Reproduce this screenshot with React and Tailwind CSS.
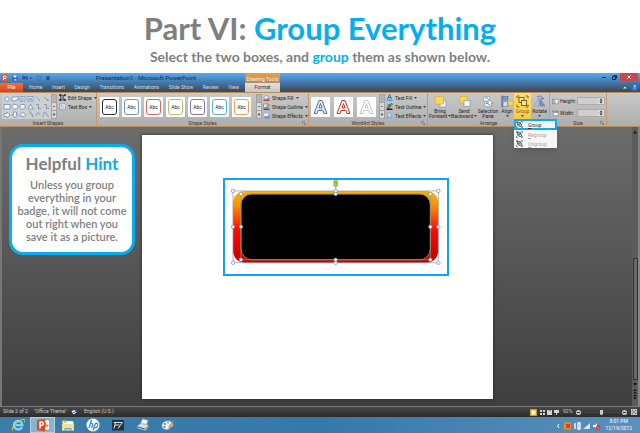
import React, { useState } from 'react';

const tabs = ['Home', 'Insert', 'Design', 'Transitions', 'Animations', 'Slide Show', 'Review', 'View'];

const shapeStyles = [
  'border-[#2b2b2b]',
  'border-[#6c97c9]',
  'border-[#cf6a66]',
  'border-[#a9c66c]',
  'border-[#8f74b0]',
  'border-[#55b3cb]',
  'border-[#f5a05a]',
];

const wordArt = [
  { fill: '#dfe8f3', stroke: '#4a76a8' },
  { fill: '#ffffff', stroke: '#c0302c' },
  { fill: '#ffffff', stroke: '#c4c4c4' },
];

const Caret = () => (
  <svg className="w-[3px] h-[2px] shrink-0" viewBox="0 0 3 2"><path d="M0 0h3L1.500 2z" fill="#444" /></svg>
);

const Launcher = () => (
  <svg className="w-1 h-1" viewBox="0 0 4 4" fill="none" stroke="#666" strokeWidth=".6"><path d="M.5 3V.5H3M2 2l1.500 1.500M3.600 2v1.600H2" /></svg>
);

const GalleryScroll = () => (
  <div className="w-[6px] shrink-0 flex flex-col bg-[#b4b4b4] border border-[#a2a2a2]">
    {['M1 2L2 1l1 1z', 'M1 1h2L2 2.200z', 'M1 .4h2M1 1.400h2L2 2.600z'].map((d, i) => (
      <button key={i} aria-label="Scroll gallery" className={`flex-1 flex items-center justify-center ${i ? 'bg-[#d8d8d8] border-t border-[#a2a2a2]' : ''}`}>
        <svg className="w-1 h-[3px]" viewBox="0 0 4 3"><path d={d} fill={i ? '#333' : '#999'} stroke={i === 2 ? '#333' : 'none'} strokeWidth=".4" /></svg>
      </button>
    ))}
  </div>
);

const RibbonGroup = ({ label, className, launcher, children }) => (
  <section aria-label={label} className={`shrink-0 flex flex-col border-r border-[#c79c68] ${className}`}>
    <div className="h-[27px] flex">{children}</div>
    <div className="h-[6px] flex items-center justify-center relative text-[#333]">
      <span>{label}</span>
      {launcher && <span className="absolute right-[2px] top-px"><Launcher /></span>}
    </div>
  </section>
);

const Command = ({ icon, label }) => (
  <button className="h-[9px] flex items-center gap-[2px] whitespace-nowrap">
    <svg className="w-[7px] h-[7px] shrink-0" viewBox="0 0 14 14">{icon}</svg>
    {label}
    <Caret />
  </button>
);

const BigCommand = ({ icon, lines, caret, className }) => (
  <button className={`flex flex-col items-center pt-[2px] ${className}`}>
    <svg className="w-[13px] h-[13px] shrink-0" viewBox="0 0 26 26">{icon}</svg>
    {lines.map((line, i) => (
      <span key={line} className="h-[5px] flex items-center gap-[1px] whitespace-nowrap">
        {line}
        {caret && lines.length > 1 && i === lines.length - 1 && <Caret />}
      </span>
    ))}
    {caret && lines.length === 1 && <span className="h-[5px] flex items-center"><Caret /></span>}
  </button>
);

const GroupGlyph = ({ dark }) => (
  <g fill="none" stroke={dark ? '#222' : '#76642a'} strokeWidth="2">
    <rect x="6" y="5" width="10" height="10" fill={dark ? '#b8d2ee' : '#ffe58a'} />
    <rect x="11" y="11" width="10" height="10" fill={dark ? '#b8d2ee' : '#ffe58a'} />
    <path d="M2 7V2h5M19 2h5v5M2 19v5h5M24 19v5h-5" />
  </g>
);

const ShapesGallery = () => (
  <svg className="w-[49px] h-[25px] shrink-0 bg-[#cfcfcf]" viewBox="0 0 49 25" fill="#eef4fb" stroke="#6f90b5" strokeWidth=".8">
    <circle cx="5" cy="5" r="2.200" />
    <path d="M10 3h4l2-1v4h-2l-1 1h-3zM18 2.500h5v4.500h-5z" />
    <path d="M19 4h2v2h-2" />
    <rect x="26" y="2.500" width="5" height="4.500" />
    <path d="M27 4.500h3M27 5.700h3" />
    <path d="M34 2.500l4 4.500M42 2.500l4 4.500v-2" fill="none" />
    <rect x="2" y="10.500" width="6" height="4.500" />
    <ellipse cx="13" cy="12.700" rx="3" ry="2.400" />
    <rect x="18" y="10.500" width="5" height="4.500" rx="1" />
    <path d="M28.500 10l2.500 5h-5z" />
    <path d="M34 10.500h2.500v4H39M42 10.500h2.500v4H47l-1-1" fill="none" />
    <path d="M2 19.500h3V18l3 3-3 3v-1.500H2zM11.500 18h3v3H16l-3 2.500-3-2.500h1.500zM18 22c0-2 1-1 1.500-3 2-1.500 3 0 2.500 1 2 0 2 2.500 0 2.500z" />
    <path d="M27 17.500l2 1-1 1 3 1.500-1 .5 1 2M34 22c0-4 4-4 4-1M40 23c3-1 1-5 3-5s1 4 4 5" fill="none" />
  </svg>
);

const TitleBar = () => (
  <div className="h-[10px] flex items-center">
    <div className="w-[96px] flex items-center gap-1 pl-[1px]">
      <svg className="w-[7px] h-[8px]" viewBox="0 0 14 16"><rect x="1" y="1" width="12" height="14" rx="1" fill="#e2562b" /><path d="M5 12V4h3a2.400 2.400 0 010 5H5" fill="none" stroke="#fff" strokeWidth="2" /></svg>
      <svg className="w-[6px] h-[6px]" viewBox="0 0 12 12"><path d="M1 1h10v10H1z" fill="#4347b5" /><path d="M3 1h6v4H3z" fill="#fff" /><path d="M4 8h5v3H4z" fill="#c9cdf0" /></svg>
      <svg className="w-[10px] h-[6px]" viewBox="0 0 20 12" fill="none" stroke="#2c48a8" strokeWidth="2.500"><path d="M3 6c3-4 9-3 7 4M2 1v6h5" /><path d="M16 5h4l-2 3z" fill="#223" stroke="none" /></svg>
      <svg className="w-[6px] h-[6px]" viewBox="0 0 12 12" fill="none" stroke="#51749d" strokeWidth="2.200"><path d="M9 3a4.300 4.300 0 10 1 5M11 1v4H7" /></svg>
      <svg className="w-1 h-[5px]" viewBox="0 0 4 5"><path d="M0 .5h4v1H0zM0 2.500h4L2 4.500z" fill="#1b2c40" /></svg>
    </div>
    <h2 className="w-[149px] text-[6px] leading-[10px] text-[#152a40] whitespace-nowrap">Presentation1 - Microsoft PowerPoint</h2>
    <div className="w-[35px] h-full text-center leading-[12px] text-[#fff3df] bg-linear-to-b from-[#e5a13f] to-[#b98a67] whitespace-nowrap">Drawing Tools</div>
    <div className="ml-auto h-full flex items-start pr-[2px]">
      <button aria-label="Minimize" className="w-[10px] h-2 flex items-center justify-center"><span className="w-1 h-px bg-[#10263d]" /></button>
      <button aria-label="Restore" className="w-[11px] h-2 flex items-center justify-center"><svg className="w-[5px] h-[5px]" viewBox="0 0 5 5" fill="none" stroke="#10263d"><path d="M.5 1.500h3v3h-3zM1.500.5h3v3" /></svg></button>
      <button aria-label="Close" className="w-[18px] h-2 bg-[#c9484b] flex items-center justify-center"><svg className="w-1 h-1" viewBox="0 0 4 4" stroke="#fff"><path d="M.5.5l3 3M3.500.5l-3 3" /></svg></button>
    </div>
  </div>
);

const TabRow = () => (
  <nav className="h-[9px] flex items-stretch text-[#d7dde3]">
    <div className="w-[245px] shrink-0 flex items-stretch">
      <button className="w-[23px] shrink-0 mr-[6px] bg-linear-to-b from-[#f0703a] to-[#d8401c] text-white rounded-t-[1px]">File</button>
      <div className="flex-1 flex items-stretch justify-between pr-[6px]">
        {tabs.map(tab => (
          <button key={tab} className="whitespace-nowrap">{tab}</button>
        ))}
      </div>
    </div>
    <button className="w-[35px] bg-linear-to-b from-[#e6ded6] to-[#c6c6c6] text-[#333]">Format</button>
    <div className="ml-auto flex items-center gap-1 pr-[2px]">
      <button aria-label="Minimize ribbon" className="flex"><svg className="w-1 h-[3px]" viewBox="0 0 4 3"><path d="M0 2.500L2 .5l2 2z" fill="#d9e4ee" /></svg></button>
      <button aria-label="Help" className="w-[7px] h-[7px] rounded-full bg-[#2f6fd4] text-white leading-[7px] font-bold">?</button>
    </div>
  </nav>
);

const SizeField = ({ id, label, icon }) => (
  <div className="flex items-center gap-[1px]">
    <svg className="w-[7px] h-[7px] shrink-0" viewBox="0 0 16 14" fill="#fff" stroke="#555">{icon}</svg>
    <label htmlFor={id} className="w-[16px] shrink-0">{label}</label>
    <span className="flex h-2 w-[28px] shrink-0 border border-[#aaa] bg-[#cfcfcf]">
      <input id={id} className="min-w-0 flex-1 bg-transparent outline-none" />
      <svg className="w-[6px] h-[6px] bg-[#dedede]" viewBox="0 0 6 6"><path d="M1.500 2.400L3 .6l1.500 1.800zM1.500 3.600h3L3 5.400z" fill="#222" /></svg>
    </span>
  </div>
);

const GroupMenu = () => (
  <div role="menu" className="absolute left-0 top-[26px] z-10 w-[43px] bg-[#f6f6f6] text-[#a6a6a6] shadow-md">
    {['Group', 'Regroup', 'Ungroup'].map((item, i) => (
      <button
        key={item}
        role="menuitem"
        disabled={i > 0}
        className={`w-full flex items-center gap-[5px] ${i === 0 ? 'h-[11px] border-2 border-[#10a8ee] bg-[#f4f6fa] text-[#333]' : 'h-[9px] px-[2px]'}`}
      >
        <svg className="w-[7px] h-[7px]" viewBox="0 0 26 26"><GroupGlyph dark /></svg>
        <span><u>{item[0]}</u>{item.slice(1)}</span>
      </button>
    ))}
  </div>
);

const Ribbon = () => (
  <div className="h-[35px] flex border-y border-[#c08c4e] bg-linear-to-b from-[#c9c9c9] to-[#aeaeae] text-[#222] leading-[6px]">
    <RibbonGroup label="Insert Shapes" className="w-[97px]">
      <div className="flex shrink-0 py-[1px] pl-[2px]">
        <ShapesGallery />
        <GalleryScroll />
      </div>
      <div className="flex flex-col pl-[2px]">
        <Command label="Edit Shape" icon={<g stroke="#222" strokeWidth="1.500" fill="#8fa9c9"><path d="M2 2l9 1-3 4 3 5H2l2-5z" /><path d="M1 1h2v2H1zM11 1h2v2h-2zM1 11h2v2H1zM11 11h2v2h-2z" fill="#222" /></g>} />
        <Command label="Text Box" icon={<g><rect x="1" y="2" width="12" height="10" fill="#f3f7fb" stroke="#5683b5" /><path d="M3 5h4M3 8h8" stroke="#444" /></g>} />
      </div>
    </RibbonGroup>
    <RibbonGroup label="Shape Styles" className="w-[212px]" launcher>
      <div className="flex items-center gap-[3px] pl-[3px] w-[159px] shrink-0">
        {shapeStyles.map(border => (
          <button key={border} aria-label="Shape style" className="w-[19px] h-[20px] shrink-0 bg-white p-[2px] flex">
            <span className={`flex-1 flex items-center justify-center border rounded-[3px] text-[#222] ${border}`}>Abc</span>
          </button>
        ))}
      </div>
      <div className="flex py-[1px]"><GalleryScroll /></div>
      <div className="flex flex-col pl-[1px]">
        <Command label="Shape Fill" icon={<g><path d="M2 7l5-5 4 5-5 4z" fill="#eef3f8" stroke="#4a6d94" /><path d="M11 7l2 4h-3z" fill="#3c6ea5" /><path d="M1 11h12v3H1z" fill="#d33c2f" /></g>} />
        <Command label="Shape Outline" icon={<g><path d="M1 2h9v7H1z" fill="#e8eef5" stroke="#3b5f8a" /><path d="M5 9l7-7 1 2-6 6z" fill="#e2a33b" stroke="#754c14" strokeWidth=".6" /><path d="M1 11h12v3H1z" fill="#2d5c9c" /></g>} />
        <Command label="Shape Effects" icon={<g><ellipse cx="8" cy="10" rx="6" ry="3.500" fill="#6d93c9" /><path d="M2 3l8-1 1 6-9 1z" fill="#f2f7fd" stroke="#7896bd" strokeWidth=".6" /></g>} />
      </div>
    </RibbonGroup>
    <RibbonGroup label="WordArt Styles" className="w-[119px]" launcher>
      <div className="flex items-center gap-1 pl-[2px] w-[70px] shrink-0">
        {wordArt.map(({ fill, stroke }) => (
          <button key={stroke} aria-label="WordArt style" className="w-[19px] h-[20px] shrink-0 bg-white flex items-center justify-center">
            <svg className="w-[15px] h-[16px]" viewBox="0 0 15 16"><path d="M1 14.500L6 1.500h3l5 13h-3l-1-3H5l-1 3zM6 9h3L7.500 4.500z" fill={fill} stroke={stroke} /></svg>
          </button>
        ))}
      </div>
      <div className="flex py-[1px]"><GalleryScroll /></div>
      <div className="flex flex-col pl-[1px]">
        <Command label="Text Fill" icon={<g><path d="M3 10l4-9 4 9M4.500 7h5" fill="none" stroke="#2f67a8" strokeWidth="2" /><path d="M1 11h12v3H1z" fill="#3aa8e8" /></g>} />
        <Command label="Text Outline" icon={<g><path d="M2 10l4-8 3 6M10 1l3 1-7 8-2 1z" fill="none" stroke="#3e4f2c" strokeWidth="1.500" /><path d="M1 11h12v3H1z" fill="#222" /></g>} />
        <Command label="Text Effects" icon={<path d="M2 13L6 1h2l4 12h-2l-1-4H5l-1 4z" fill="#eaf4fd" stroke="#4d9bd8" strokeWidth="1.200" />} />
      </div>
    </RibbonGroup>
    <RibbonGroup label="Arrange" className="w-[122px]">
      <BigCommand className="w-[24px]" caret lines={['Bring', 'Forward']} icon={<g><rect x="12" y="12" width="12" height="12" fill="#eef2f7" stroke="#718196" /><rect x="2" y="3" width="17" height="15" fill="#f7da4d" stroke="#d2a522" /></g>} />
      <BigCommand className="w-[24px]" caret lines={['Send', 'Backward']} icon={<g><rect x="4" y="3" width="14" height="13" fill="#f7da4d" stroke="#d2a522" /><rect x="12" y="11" width="12" height="12" fill="#eef2f7" stroke="#718196" /></g>} />
      <BigCommand className="w-[24px]" lines={['Selection', 'Pane']} icon={<g><path d="M3 3h12v9H3zM6 14h12v9H6z" fill="#f5f8fb" stroke="#6d8bae" /><path d="M5 6h7M8 17h7" stroke="#6d8bae" strokeWidth="2" /><path d="M13 8l9 9-4 0 2 5-3 1-2-5-3 2z" fill="#fff" stroke="#666" /></g>} />
      <BigCommand className="w-[14px]" caret lines={['Align']} icon={<g><path d="M2 1v24" stroke="#315b91" strokeWidth="2" /><rect x="4" y="3" width="10" height="7" fill="#73a2d9" stroke="#345f97" /><path d="M4 13h9v10H4z" fill="#cfe0f2" stroke="#345f97" /><rect x="14" y="12" width="10" height="9" fill="#f7da4d" stroke="#c69b1d" /></g>} />
      <div className="relative flex">
        <BigCommand className="w-[17px] bg-linear-to-b from-[#ffe077] to-[#ffc832] text-[#76642a]" caret lines={['Group']} icon={<GroupGlyph />} />
        <GroupMenu />
      </div>
      <BigCommand className="w-[17px]" caret lines={['Rotate']} icon={<g><path d="M12 5v17H2z" fill="#b8bed0" stroke="#7d86a8" /><path d="M14 8l10 14H14z" fill="#7d92cc" stroke="#53679f" /><path d="M8 4c5-4 11-1 11 4M16 6l3 3 3-4" fill="none" stroke="#5d76b8" strokeWidth="2" /></g>} />
    </RibbonGroup>
    <RibbonGroup label="Size" className="w-[57px]" launcher>
      <div className="flex flex-col gap-1 pt-1 pl-[2px]">
        <SizeField id="height" label="Height:" icon={<><path d="M7 2h7v10H7z" /><path d="M2 1v12M0 3l2-2 2 2M0 11l2 2 2-2" fill="none" /></>} />
        <SizeField id="width" label="Width:" icon={<><path d="M3 5h11v7H3z" /><path d="M1 2h13M3 0L1 2l2 2M12 0l2 2-2 2" fill="none" /></>} />
      </div>
    </RibbonGroup>
  </div>
);

const handles = [
  [8, 11], [111, 11], [214, 11], [8, 47], [214, 47], [8, 83], [111, 83], [214, 83],
  [16, 14], [111, 14], [206, 14], [16, 47], [206, 47], [16, 80], [111, 80], [206, 80],
];

const Badge = () => (
  <svg className="w-full block" viewBox="0 0 223 94">
    <defs>
      <linearGradient id="flame" x1="0" y1="0" x2="0" y2="1">
        <stop offset="0" stopColor="#ffb400" />
        <stop offset=".2" stopColor="#ff9000" />
        <stop offset=".55" stopColor="#fb0b00" />
        <stop offset="1" stopColor="#c00000" />
      </linearGradient>
    </defs>
    <rect x="8" y="11" width="206" height="72" rx="12" fill="url(#flame)" />
    <rect x="16" y="14" width="190" height="66" rx="11" fill="#000" stroke="#d98a1c" strokeWidth=".8" />
    <path d="M8 11h206v72H8zM16 14h190v66H16zM111 5v6" fill="none" stroke="#8b9aa5" strokeWidth=".7" />
    {handles.map(([x, y], i) => (
      <circle key={i} cx={x} cy={y} r="1.800" fill="#eef6f9" stroke="#71838e" strokeWidth=".6" />
    ))}
    <circle cx="111" cy="2" r="2" fill="#9be04a" stroke="#5f9b2a" strokeWidth=".6" />
    <circle cx="111" cy="4.500" r="2" fill="#9be04a" stroke="#5f9b2a" strokeWidth=".6" />
  </svg>
);

const Workspace = () => (
  <main className="flex-1 flex items-stretch border-l-2 border-[#777] bg-linear-to-b from-[#6c6c6c] to-[#3f3f3f]">
    <div className="w-[22%] shrink-0 pl-[7px] pt-[17px]">
      <aside className="w-[126px] h-[111px] bg-white border-[3px] border-[#06aeef] rounded-[14px] text-center text-[#7f7f7f] font-[Lato,sans-serif]">
        <h3 className="text-[17px] leading-5 pt-[7px] font-bold">Helpful <span className="text-[#06aeef]">Hint</span></h3>
        <p className="text-[11px] leading-[13px] pt-1 font-semibold">
          Unless you group<br />
          everything in your<br />
          badge, it will not come<br />
          out right when you<br />
          save it as a picture.
        </p>
      </aside>
    </div>
    <div className="w-[55%] shrink-0 pt-2 pb-[6px]">
      <div className="aspect-[352/265] bg-white shadow-[0_0_3px_#222] pt-[43px]">
        <div className="ml-[23%] w-[64.5%] border-2 border-[#14a3ea]">
          <Badge />
        </div>
      </div>
    </div>
    <div className="ml-auto w-2 shrink-0 flex flex-col items-center bg-[#5c5c5c] border-r-2 border-[#858585]">
      <svg className="w-1 h-[10px]" viewBox="0 0 4 10"><path d="M0 6.500l2-3 2 3z" fill="#1c1c1c" /></svg>
      <div className="flex-1" />
      <div className="w-[5px] h-[122px] bg-[#686868] border border-[#333]" />
      <svg className="w-1 h-[26px]" viewBox="0 0 4 26" fill="#151515"><path d="M0 3h4L2 6zM0 11l2-2 2 2zM0 13.500l2-2 2 2zM0 15h4l-2 2zM0 17.500h4l-2 2z" /></svg>
    </div>
  </main>
);

const StatusBar = () => {
  const [zoom, setZoom] = useState(92);

  return (
    <footer className="h-[11px] flex items-center px-[3px] border-t border-[#777] bg-linear-to-b from-[#484848] to-[#2b2b2b] text-[#cfcfcf] whitespace-nowrap">
      <span className="w-[31px]">Slide 2 of 2</span>
      <span className="w-[37px]">"Office Theme"</span>
      <svg className="w-[6px] h-[6px] mr-[7px]" viewBox="0 0 12 12"><path d="M1 4l6-2 4 5-6 4z" fill="#e8eefa" /><path d="M4 6l2 2 5-6" fill="none" stroke="#4674d8" strokeWidth="2" /></svg>
      <span>English (U.S.)</span>
      <div className="ml-auto flex items-center">
        <button aria-label="Normal view" className="w-[7px] h-[7px] mr-[3px] bg-[#f7d35b] border border-[#c99b22] flex items-center justify-center"><span className="w-[3px] h-[3px] bg-white" /></button>
        <svg className="w-[19px] h-[5px] mr-1" viewBox="0 0 19 5" fill="#d2d2d2"><path d="M0 0h2v2H0zM3 0h2v2H3zM0 3h2v2H0zM3 3h2v2H3zM7 0h2l1 1 1-1h1v5H7zM14 0h5v3h-2v2h-1V3h-2z" /></svg>
        <label htmlFor="zoom" className="w-[13px]">{zoom}%</label>
        <button aria-label="Zoom out" className="w-[5px] h-[5px] rounded-full bg-[#ccc] flex items-center justify-center"><span className="w-[3px] h-px bg-[#333]" /></button>
        <input
          id="zoom"
          type="range"
          min="10"
          max="174"
          value={zoom}
          onChange={e => setZoom(e.target.value)}
          className="appearance-none w-[41px] h-px bg-[#444] [&::-webkit-slider-thumb]:appearance-none [&::-webkit-slider-thumb]:w-[3px] [&::-webkit-slider-thumb]:h-[5px] [&::-webkit-slider-thumb]:bg-[#ccc] [&::-webkit-slider-thumb]:rounded-b-sm"
        />
        <button aria-label="Zoom in" className="w-[5px] h-[5px] rounded-full bg-[#ccc] flex items-center justify-center mr-1"><span className="w-[3px] h-px bg-[#333]" /></button>
        <button aria-label="Fit slide" className="flex"><svg className="w-[6px] h-[6px]" viewBox="0 0 12 12"><path d="M0 0h12v12H0z" fill="#ddd" /><path d="M2 5V2h3M7 2h3v3M10 7v3H7M5 10H2V7M2 2l8 8M10 2l-8 8" fill="none" stroke="#333" /></svg></button>
      </div>
    </footer>
  );
};

const apps = [
  { name: 'Internet Explorer', icon: <g fill="none"><path d="M22 18a8.500 8.500 0 11.800-4H9" stroke="#7fd4fb" strokeWidth="4.500" /><path d="M3 25C-1 18 17 1 27 3c2 1 1 4 0 6" stroke="#f3cd42" strokeWidth="2" /></g> },
  { name: 'PowerPoint', active: true, icon: <g><path d="M12 4h15v20H12z" fill="#fff" stroke="#db5a31" /><path d="M20 8a5 5 0 105 5h-5z" fill="#e77d4c" /><path d="M2 4l16-2v25L2 24z" fill="#d94a22" /><path d="M8 21V8h3a3.500 3.500 0 010 7H8" fill="none" stroke="#fff" strokeWidth="3" /></g> },
  { name: 'File Explorer', icon: <g><path d="M2 5h9l2 3h13v17H2z" fill="#e4bd53" /><path d="M5 6h19v10H5z" fill="#fff" /><path d="M6 8h6" stroke="#58ad54" strokeWidth="2" /><path d="M2 12h24v13H2z" fill="#f8df8e" /><path d="M7 26v-6h14v6h-3v-3h-8v3z" fill="#65b1e5" /></g> },
  { name: 'HP', icon: <g><circle cx="14" cy="14" r="13" fill="#fff" /><path d="M11 4L6 20M8 13c5-4 6-1 5 2l-2 5M19 10l-5 15M18 12c6-3 7 0 4 6-1 2-3 2-5 1" fill="none" stroke="#2589bd" strokeWidth="2.400" /></g> },
  { name: 'Media', icon: <g><path d="M2 4h24v21H2z" fill="#253239" /><path d="M5 9h18l-9 12M8 14h9M9 9L6 21" fill="none" stroke="#d5e5eb" strokeWidth="2" /></g> },
  { name: 'Printer', icon: <g><path d="M13 2l11 3-4 10-11-3z" fill="#fff" stroke="#a4b7c8" /><path d="M3 15l6-4 15 2 1 6-6 6-16-4z" fill="#d7dfe7" stroke="#657889" /><path d="M4 18l14 4M19 22l5-5" stroke="#4b5b68" strokeWidth="2" /></g> },
  { name: 'Paint', icon: <g><path d="M2 15C2 7 18 2 22 10s-2 6-4 10-16 5-16-5z" fill="#e6f3fc" stroke="#a5c8e2" /><circle cx="8" cy="12" r="2" fill="#e34b40" /><circle cx="14" cy="9" r="2" fill="#6bbf48" /><circle cx="7" cy="18" r="2" fill="#3178d2" /><path d="M27 2L16 16l-2 9 5-6z" fill="#e78c34" /></g> },
];

const Taskbar = () => (
  <div className="h-4 flex items-center pl-[5px] bg-linear-to-r from-[#3d7da9] via-[#3678aa] to-[#5a91bc]">
    {apps.map(({ name, icon, active }) => (
      <button key={name} aria-label={name} className={`w-[25px] h-4 flex items-center justify-center ${active ? 'bg-[#8ab3ce] border border-[#b7d0df]' : ''}`}>
        <svg className="w-[14px] h-[14px]" viewBox="0 0 28 28">{icon}</svg>
      </button>
    ))}
    <div className="ml-auto flex items-center gap-1 pr-2 text-white">
      <svg className="w-[44px] h-[9px]" viewBox="0 0 44 9" fill="none">
        <path d="M2 3L.5 5 2 7" stroke="#fff" />
        <path d="M7 1.500h7v7H7z" fill="#e89530" /><path d="M9 3l4 4M13 3L9 7" stroke="#c92d22" strokeWidth="1.500" />
        <path d="M18 2v6M21 2h2v6h-2z" stroke="#f2f2f2" strokeWidth="1.500" />
        <path d="M26 8l7-6v6z" fill="#d7e2ea" />
        <path d="M36 4h2l2-2v6l-2-2h-2z" fill="#fff" /><circle cx="41" cy="6.500" r="2.200" fill="#d9342b" /><path d="M40 5.500l2 2" stroke="#fff" strokeWidth=".7" />
      </svg>
      <div className="text-center leading-[7px]">
        <div>8:01 PM</div>
        <div>12/19/2012</div>
      </div>
    </div>
  </div>
);

const App = () => {
  return (
    <div className="min-h-screen flex flex-col bg-white font-[Roboto,sans-serif] text-[5px]">
      <header className="h-[73px] pt-[9px] text-center font-bold text-[#7f7f7f] font-[Lato,sans-serif]">
        <h1 className="text-[31px] leading-[39px]">Part VI: <span className="text-[#06aeef]">Group Everything</span></h1>
        <p className="text-[14px] leading-[18px]">Select the two boxes, and <span className="text-[#06aeef]">group</span> them as shown below.</p>
      </header>
      <div className="bg-linear-to-b from-[#55aaf0] via-[#4279ac] to-[#3e464e]">
        <TitleBar />
        <TabRow />
      </div>
      <Ribbon />
      <Workspace />
      <StatusBar />
      <Taskbar />
    </div>
  );
};

export default App;
